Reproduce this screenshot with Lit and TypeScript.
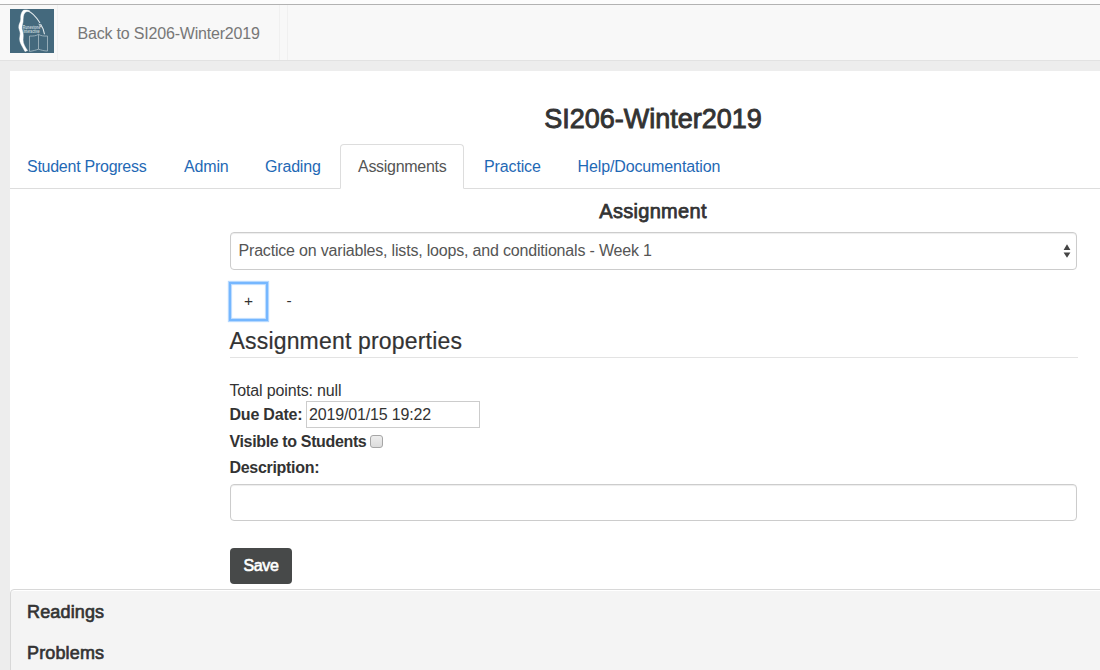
import { LitElement, html, svg, css } from "lit";
import { customElement, state } from "lit/decorators.js";
import { classMap } from "lit/directives/class-map.js";

const logo = svg`<svg class="logo" viewBox="0 0 44 44" width="44" height="44">
  <rect width="44" height="44" fill="#44697d"/>
  <path d="M13 1.5 C11 4 10.5 7 10.8 10 C11 13 8.5 15 8.8 18.5 C9 21 11 23 10 27 C9 31 10.3 34 12 37 L15 42.5 L17.5 41.5 C15 38 13 34.5 13 31 C13.3 27 13.5 25 12.5 22 C11.2 19 12.3 16 13 13 C13.2 9 13 6 15 3.5 C16.5 2.2 18.5 2.5 20 2.2 C18 0.8 15 0.8 13 1.5Z" fill="#fff" stroke="#fff" stroke-width=".5"/>
  <path d="M17.5 1.8 C23 3.5 26.5 8.5 30 14 M30.5 15 C32.5 18 34 21.5 34.5 25.2" fill="none" stroke="#e3eaed" stroke-width="1.1"/>
  <path d="M28.8 14.8 L31.2 18.2" stroke="#dfe7ea" stroke-width="1"/>
  <path d="M19.5 27 C23 27.3 26.5 26.8 28.5 25.3 C30.5 26.8 34 27.3 37.5 27 V42 C34 42 31 41 28.5 40.2 C26 41 23 42 19.5 42.4Z M28.5 25.3 V40.2" fill="none" stroke="#a9bcc5" stroke-width=".8"/>
  <text x="12.8" y="20.4" textLength="17.5" lengthAdjust="spacingAndGlyphs" class="mark">Runestone</text>
  <text x="13.2" y="24.3" textLength="16.5" lengthAdjust="spacingAndGlyphs" class="mark">Interactive</text>
</svg>`;

const tabs = [
  ["Student Progress", "progress"],
  ["Admin", "admin"],
  ["Grading", "grading"],
  ["Assignments", "assignments"],
  ["Practice", "practice"],
  ["Help/Documentation", "help"],
];

@customElement("app-root")
export class AppRoot extends LitElement {
  @state() private active = "assignments";

  static styles = css`
    :host {
      display: block;
      height: 670px;
      overflow: hidden;
      background: #ededed;
      color: #333;
      font: 16px/20px "Liberation Sans", Arial, sans-serif;
    }
    * { box-sizing: border-box; }
    .navbar {
      display: flex;
      height: 61px;
      background: #f8f8f8;
      border-top: 4px solid #fcfcfc;
      border-bottom: 1px solid #e2e2e2;
      box-shadow: inset 0 1px #b2b2b2;
    }
    .logo { display: block; margin: 5px 3px 0 10px; flex: none; }
    .mark { font: bold 4.6px "Liberation Sans", sans-serif; fill: #c9d6dc; }
    .back {
      width: 223px;
      margin-top: 1px;
      padding: 19px 0 0 19.5px;
      border: solid #f0f0f0;
      border-width: 0 1px;
      color: #777;
      letter-spacing: -.19px;
      white-space: nowrap;
    }
    .rest { width: 8px; margin-top: 1px; border-right: 1px solid #f0f0f0; }
    .page {
      width: 1285px;
      margin: 10px 0 0 10px;
      height: 599px;
      background: #fff;
    }
    h1, h2, h3 { margin: 0; font-weight: 400; }
    h1 {
      height: 73px;
      padding: 33px 0 0 1px;
      text-align: center;
      font-size: 27px;
      line-height: 30px;
      letter-spacing: 0;
      -webkit-text-stroke: .9px #333;
    }
    .tabs { display: flex; height: 45px; border-bottom: 1px solid #ddd; }
    .tab {
      height: 45px;
      padding: 12px 0 0 16px;
      margin-right: 2px;
      border: 1px solid transparent;
      border-radius: 4px 4px 0 0;
      color: #1f69b5;
      white-space: nowrap;
      cursor: pointer;
    }
    .active { color: #555; background: #fff; border-color: #ddd #ddd #fff; }
    .progress { width: 155px; letter-spacing: -.26px; }
    .admin { width: 79px; letter-spacing: -.15px; }
    .grading { width: 90px; letter-spacing: -.18px; }
    .assignments { width: 124px; padding-left: 17px; letter-spacing: -.29px; }
    .practice { width: 91px; padding-left: 17px; letter-spacing: -.13px; }
    .help { width: 178px; padding-left: 17.5px; letter-spacing: -.12px; }
    .form { width: 848px; margin-left: 219.5px; height: 400px; }
    .form h2 {
      padding: 10px 1px 0 0;
      text-align: center;
      font-size: 20px;
      line-height: 24px;
      letter-spacing: .3px;
      -webkit-text-stroke: .75px #333;
    }
    .field {
      width: 847px;
      margin-left: .5px;
      border: 1px solid #ccc;
      border-radius: 4px;
      box-shadow: inset 0 1px 1px rgba(0, 0, 0, .075);
    }
    .select {
      display: flex;
      justify-content: space-between;
      height: 38px;
      margin-top: 9px;
      padding: 8px 5px 0 7.5px;
      color: #555;
      letter-spacing: -.187px;
    }
    .arrows { margin-top: 3px; }
    .buttons { display: flex; margin-top: 13px; height: 36px; }
    .btn { width: 40px; padding-top: 8px; text-align: center; font-size: 15.5px; }
    .focus {
      width: 35px;
      height: 35px;
      padding-top: 7px;
      margin: 1px 3px 0 1.5px;
      box-shadow: 0 0 0 2px #75b7ff, 0 0 1px 3px #b5d8ff, inset 0 0 1px 1px #b9daff;
    }
    .form h3 {
      height: 39px;
      padding-top: 8px;
      border-bottom: 1px solid #e3e3e3;
      font-size: 23px;
      line-height: 28px;
      letter-spacing: .18px;
      -webkit-text-stroke: .2px #333;
    }
    .points { margin-top: 22px; line-height: 21px; letter-spacing: -.16px; }
    .row { display: flex; height: 27px; font-weight: bold; white-space: nowrap; }
    .date {
      width: 174px;
      height: 27px;
      margin-left: 3.5px;
      padding: 3px 0 0 2px;
      border: 1px solid #ccc;
      font-weight: 400;
      letter-spacing: -.16px;
    }
    .row .label { padding-top: 3px; letter-spacing: -.3px; }
    .row .due { width: 73px; padding-top: 4px; letter-spacing: -.2px; }
    .row .visible { width: 137.5px; padding-top: 4px; letter-spacing: -.36px; }
    .check {
      width: 13px;
      height: 13px;
      margin: 7px 0 0 3px;
      border: 1px solid #a6a6a6;
      border-radius: 3px;
      background: linear-gradient(#ededed, #dcdcdc);
    }
    .desc { height: 37px; margin-top: 2px; }
    .save {
      width: 62px;
      height: 36px;
      margin: 27px 0 0 .5px;
      padding-top: 8px;
      border-radius: 4px;
      background: #474949;
      color: #fff;
      text-align: center;
      letter-spacing: -.4px;
      -webkit-text-stroke: .6px #fff;
    }
    .panels {
      height: 120px;
      border: 1px solid #d8d8d8;
      border-radius: 4px 0 0 0;
      background: #f4f4f4;
      box-shadow: inset 0 1px #fff;
    }
    .panel {
      height: 41px;
      padding: 12px 0 0 16px;
      font-size: 18px;
      letter-spacing: .15px;
      -webkit-text-stroke: .65px #333;
    }
  `;

  render() {
    return html`
      <nav class="navbar">
        ${logo}
        <div class="back">Back to SI206-Winter2019</div>
        <div class="rest"></div>
      </nav>
      <main class="page">
        <h1>SI206-Winter2019</h1>
        <div class="tabs">
          ${tabs.map(([label, id]) => html`<div
            class=${classMap({ tab: true, [id]: true, active: this.active === id })}
            @click=${() => (this.active = id)}>${label}</div>`)}
        </div>
        <section class="form">
          <h2>Assignment</h2>
          <div class="field select">
            <span>Practice on variables, lists, loops, and conditionals - Week 1</span>
            <svg class="arrows" width="8" height="14" viewBox="0 0 8 14">
              <path d="M4 .2 L7.4 6 H.6Z M4 13.8 L7.4 8.5 H.6Z" fill="#444"/>
            </svg>
          </div>
          <div class="buttons"><div class="btn focus">+</div><div class="btn">-</div></div>
          <h3>Assignment properties</h3>
          <div class="points">Total points: null</div>
          <div class="row"><span class="label due">Due Date:</span><div class="date">2019/01/15 19:22</div></div>
          <div class="row"><span class="label visible">Visible to Students</span><span class="check"></span></div>
          <div class="row"><span class="label">Description:</span></div>
          <div class="field desc"></div>
          <div class="save">Save</div>
        </section>
        <div class="panels">
          <div class="panel">Readings</div>
          <div class="panel">Problems</div>
        </div>
      </main>`;
  }
}
